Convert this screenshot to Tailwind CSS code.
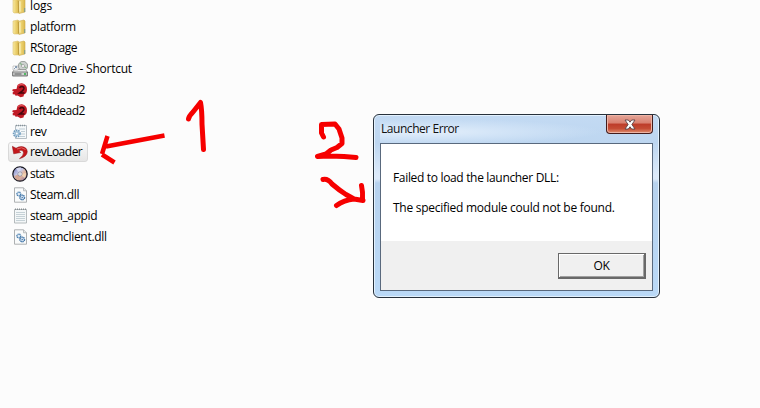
<!DOCTYPE html>
<html lang="en">
<head>
<meta charset="utf-8">
<title>Launcher Error</title>
<script src="https://cdn.jsdelivr.net/npm/@tailwindcss/browser@4"></script>
</head>
<body class="relative w-[760px] h-[408px] overflow-hidden bg-[#fcfcfc] text-black text-[12px] font-['Open_Sans','Noto_Sans',sans-serif]">
<svg class="absolute size-0">
  <defs>
    <linearGradient id="fold"><stop offset="0" stop-color="#f8eaa5"/><stop offset=".45" stop-color="#ecd272"/><stop offset="1" stop-color="#dcb94c"/></linearGradient>
    <linearGradient id="disc" x1="0" y1="0" x2="1" y2="1"><stop offset="0" stop-color="#6b72b5"/><stop offset=".4" stop-color="#c4c8e8"/><stop offset=".6" stop-color="#e5b59a"/><stop offset="1" stop-color="#7d6ba8"/></linearGradient>
    <symbol id="folder" viewBox="0 0 16 16">
      <path d="M1 2l5-1 1 1v13l-5 0-1-1z" fill="url(#fold)" stroke="#dcc274" stroke-width=".6"/>
      <path d="M6 2.500l6-1.500 1 1v12l-6 1.500z" fill="url(#fold)" stroke="#c9a84a" stroke-width=".6"/>
      <path d="M6.500 3v11.500" stroke="#b99636" stroke-width=".8"/><path d="M8 3.500v10" stroke="#fbf3c4"/>
      <path d="M12.700 10v4" stroke="#6e9b9a" stroke-width=".9"/>
    </symbol>
    <symbol id="drive" viewBox="0 0 16 16">
      <circle cx="11" cy="5" r="4.700" fill="#cdd2cf" stroke="#858b88" stroke-width=".8"/>
      <path d="M11 5L8 2M11 5l3.500 2" stroke="#8cb98f" stroke-width="1.200"/><circle cx="11" cy="5" r="1.500" fill="#fff" stroke="#888" stroke-width=".6"/>
      <path d="M2.500 8.500h11l2 2.500v4h-15v-4z" fill="#e6e6e6" stroke="#777" stroke-width=".6"/>
      <path d="M.7 11h14.600v3.800h-14.600z" fill="#cfd1d1" stroke="#5b5b5b" stroke-width=".7"/>
      <path d="M2.500 13h7" stroke="#555"/><path d="M12 13h2" stroke="#29b13c" stroke-width="1.500"/>
      <path d="M1 5h5v4H1z" fill="#fff" stroke="#aaa" stroke-width=".6"/><path d="M2 8l2.500-2.300M3 5.700h1.600v1.600" stroke="#4d6d8f" stroke-width=".7" fill="none"/>
    </symbol>
    <symbol id="l4d" viewBox="0 0 16 16">
      <path d="M5.500 3Q8 .7 11 1.600 15 3 15 7.500 15 11.500 12 12.500L11.500 14.500 8.500 15.300 5.500 13.500 3.500 13.700 3 12.500.8 12.300.6 10.500 2 9.500.3 9 .7 7.300 4.500 7z" fill="#c01a25"/>
      <path d="M6 3.500Q9 1.500 12 3" stroke="#e5535a" fill="none"/>
      <path d="M7.700 6q.3-1.500 2.300-1.500 2.200.2 1.900 2.200Q11.400 8.700 7.700 11h4.800" stroke="#45070d" stroke-width="1.500" fill="none"/>
    </symbol>
    <symbol id="rev" viewBox="0 0 16 16">
      <path d="M3.500 1.500h11v13h-11z" fill="#f5f8fa" stroke="#a4afb6" stroke-width=".8"/>
      <path d="M4 1.500h10" stroke="#87939a" stroke-width="1.500" stroke-dasharray="1 1"/>
      <path d="M7 5h6M9 7.500h4M9 10h4M8 12.500h5" stroke="#b9c7d0" stroke-width=".9"/>
      <circle cx="4.800" cy="9.500" r="3.200" fill="#dceaf4" stroke="#6d9abd" stroke-width="1.700" stroke-dasharray="1.500 .8"/><circle cx="4.800" cy="9.500" r="2.500" fill="#9dbdd5"/><circle cx="4.800" cy="9.500" r="1" fill="#fff"/>
    </symbol>
    <symbol id="undo" viewBox="0 0 16 16">
      <path d="M.3 2.300L1.700 9.800 8.700 8.500 6.700 6.700Q11 5.300 11.500 8.500 11.700 11.500 7.500 14.700 14.900 12.700 15.300 7.800 15 3 9.500 2.600 6.600 2.500 4 4.200z" fill="#c3171b" stroke="#8e1114" stroke-width=".5"/>
      <path d="M5 5Q10 2.300 13.500 5.500" stroke="#e36561" fill="none"/>
    </symbol>
    <symbol id="cd" viewBox="0 0 16 16">
      <circle cx="8" cy="8" r="7.200" fill="url(#disc)" stroke="#17171f" stroke-width="1.200"/>
      <path d="M8 8L4 2.500Q6 1.300 9 1.500z" fill="#d5d8f0"/><path d="M8 8l6-1q.4 3-1.500 5z" fill="#f0d1b0"/><path d="M8 8L2 10q1.500 3.500 5 4z" fill="#d3a795"/>
      <circle cx="8" cy="8" r="2.100" fill="#fff" stroke="#777a94" stroke-width=".7"/><circle cx="8" cy="8" r=".7" fill="#999"/>
    </symbol>
    <symbol id="dll" viewBox="0 0 16 16">
      <path d="M2.500 .8h9l3 3v11.400h-12z" fill="#fafbfb" stroke="#a5a8aa" stroke-width=".9"/><path d="M11.500 .8v3h3" fill="#e5e8ea" stroke="#a5a8aa" stroke-width=".7"/>
      <circle cx="6.800" cy="7" r="1.900" fill="#e0ebf7" stroke="#477dad" stroke-width="1.300" stroke-dasharray="1.200 .5"/>
      <circle cx="10.200" cy="10.500" r="2.300" fill="#e0ebf7" stroke="#3d72a5" stroke-width="1.400" stroke-dasharray="1.300 .5"/><circle cx="10.200" cy="10.500" r=".7" fill="#3d72a5"/>
    </symbol>
    <symbol id="txt" viewBox="0 0 16 16">
      <path d="M2.500 1.500h12v13.500h-12z" fill="#f4f7f8" stroke="#adb3b6" stroke-width=".9"/>
      <path d="M3 1.300h11" stroke="#858c90" stroke-width="1.500" stroke-dasharray="1 1"/>
      <path d="M4 4.500h9M4 6.500h9M4 8.500h9M4 10.500h9M4 12.500h9" stroke="#b9c7cd" stroke-width=".8"/>
    </symbol>
  </defs>
</svg>

<main class="flex items-start">
  <ul class="-mt-[5px] w-[150px] pl-[8px] leading-[20px] whitespace-nowrap">
    <li class="flex h-[21px] items-center gap-[2px] pl-[4px]"><svg class="size-4"><use href="#folder"/></svg><span class="tracking-[-0.1px]">logs</span></li>
    <li class="flex h-[21px] items-center gap-[2px] pl-[4px]"><svg class="size-4"><use href="#folder"/></svg><span class="tracking-[-0.35px]">platform</span></li>
    <li class="flex h-[21px] items-center gap-[2px] pl-[4px]"><svg class="size-4"><use href="#folder"/></svg><span class="tracking-[-0.4px]">RStorage</span></li>
    <li class="flex h-[21px] items-center gap-[2px] pl-[4px]"><svg class="size-4"><use href="#drive"/></svg><span class="tracking-[-0.25px]">CD Drive - Shortcut</span></li>
    <li class="flex h-[21px] items-center gap-[2px] pl-[4px]"><svg class="size-4"><use href="#l4d"/></svg><span class="tracking-[-0.5px]">left4dead2</span></li>
    <li class="flex h-[21px] items-center gap-[2px] pl-[4px]"><svg class="size-4"><use href="#l4d"/></svg><span class="tracking-[-0.5px]">left4dead2</span></li>
    <li class="flex h-[21px] items-center gap-[2px] pl-[4px]"><svg class="size-4"><use href="#rev"/></svg><span class="tracking-[-0.5px]">rev</span></li>
    <li class="flex h-[20px] w-[80px] items-center gap-[2px] rounded-[3px] border border-[#d9d9d9] bg-linear-to-b from-[#f9f9f9] to-[#e6e6e6] pl-[3px] mb-px"><svg class="size-4"><use href="#undo"/></svg><span class="tracking-[-0.5px]">revLoader</span></li>
    <li class="flex h-[21px] items-center gap-[2px] pl-[4px]"><svg class="size-4"><use href="#cd"/></svg><span class="tracking-[-0.5px]">stats</span></li>
    <li class="flex h-[21px] items-center gap-[2px] pl-[4px]"><svg class="size-4"><use href="#dll"/></svg><span class="tracking-[-0.3px]">Steam.dll</span></li>
    <li class="flex h-[21px] items-center gap-[2px] pl-[4px]"><svg class="size-4"><use href="#txt"/></svg><span class="tracking-[-0.4px]">steam_appid</span></li>
    <li class="flex h-[21px] items-center gap-[2px] pl-[4px]"><svg class="size-4"><use href="#dll"/></svg><span class="tracking-[-0.3px]">steamclient.dll</span></li>
  </ul>

  <section class="mt-[114px] ml-[223px] flex h-[184px] w-[287px] flex-col rounded-[6px] border border-[#27313c] bg-[linear-gradient(180deg,#c3daf3_0px,#bdd6f0_28px,#dceafa_60px,#dceafa_64px,#b7d2ee_68px,#bad9f7_100%)] px-[6px] pb-[6px] shadow-[inset_0_0_0_1px_#e3f1fd]">
    <header class="flex h-[28px] items-start justify-between bg-[radial-gradient(ellipse_at_15%_60%,#e4effb_0%,#d2e4f7_25%,transparent_55%)]">
      <h1 class="pl-px pt-[4px] leading-[20px] tracking-[-0.45px] text-[#111]">Launcher Error</h1>
      <button class="flex h-[19px] w-[47px] items-center justify-center rounded-b-[4px] border border-t-0 border-[#431c1c] bg-[linear-gradient(180deg,#e5a699_0%,#d9806f_45%,#bd3c29_50%,#c54c34_75%,#df8f70_100%)] shadow-[inset_0_0_0_1px_#eeb4a5]">
        <svg class="h-[11px] w-[12px]" viewBox="0 0 12 11"><path d="M1 1h3.300L6 3.200 7.700 1H11L7.900 5.500 11 10H7.700L6 7.800 4.300 10H1L4.100 5.500z" fill="#fff" stroke="#594347" stroke-width=".9"/></svg>
      </button>
    </header>
    <div class="flex flex-1 flex-col border border-[#59697d] bg-white">
      <div class="h-[97px] pl-[12px] pt-[24px] leading-[20px] whitespace-nowrap">
        <p class="tracking-[-0.33px]">Failed to load the launcher DLL:</p>
        <p class="mt-[10px] tracking-[-0.26px]">The specified module could not be found.</p>
      </div>
      <footer class="flex flex-1 items-start justify-end bg-[#f0f0f0] pr-[6px] pt-[12px]">
        <button class="h-[26px] w-[88px] border border-r-2 border-b-2 border-[#696969] leading-[22px] tracking-[-0.3px] shadow-[inset_1px_1px_0_#fff,inset_-1px_-1px_0_#a0a0a0]">OK</button>
      </footer>
    </div>
  </section>
</main>

<svg class="pointer-events-none absolute inset-0 h-[408px] w-[760px]" viewBox="0 0 760 408" fill="none" stroke="#f60000">
  <path d="M164.500 135.500L106 146.500M107.500 136L102 154M102 154.500L114.500 162.500" stroke-width="4.500"/>
  <g stroke-width="5" stroke-linecap="round" stroke-linejoin="round">
    <path d="M188.500 119Q189 116 193 112L200.500 102.500Q202 110 202 124L203.500 149.500"/>
    <path d="M323.500 137L321.500 133V124.500L335 124 339 129 342 138V143.500L337 147.500 331 150 326 154 317.500 156.500 329 156 344 156.500 356 157.500"/>
    <path d="M323 179.500Q328 178.500 332 184 339 190 346 194.500L354 199 363 200.500M361.500 185.500Q363 192 362.500 200M354 199Q344 200 336.500 205.500"/>
  </g>
</svg>
</body>
</html>
